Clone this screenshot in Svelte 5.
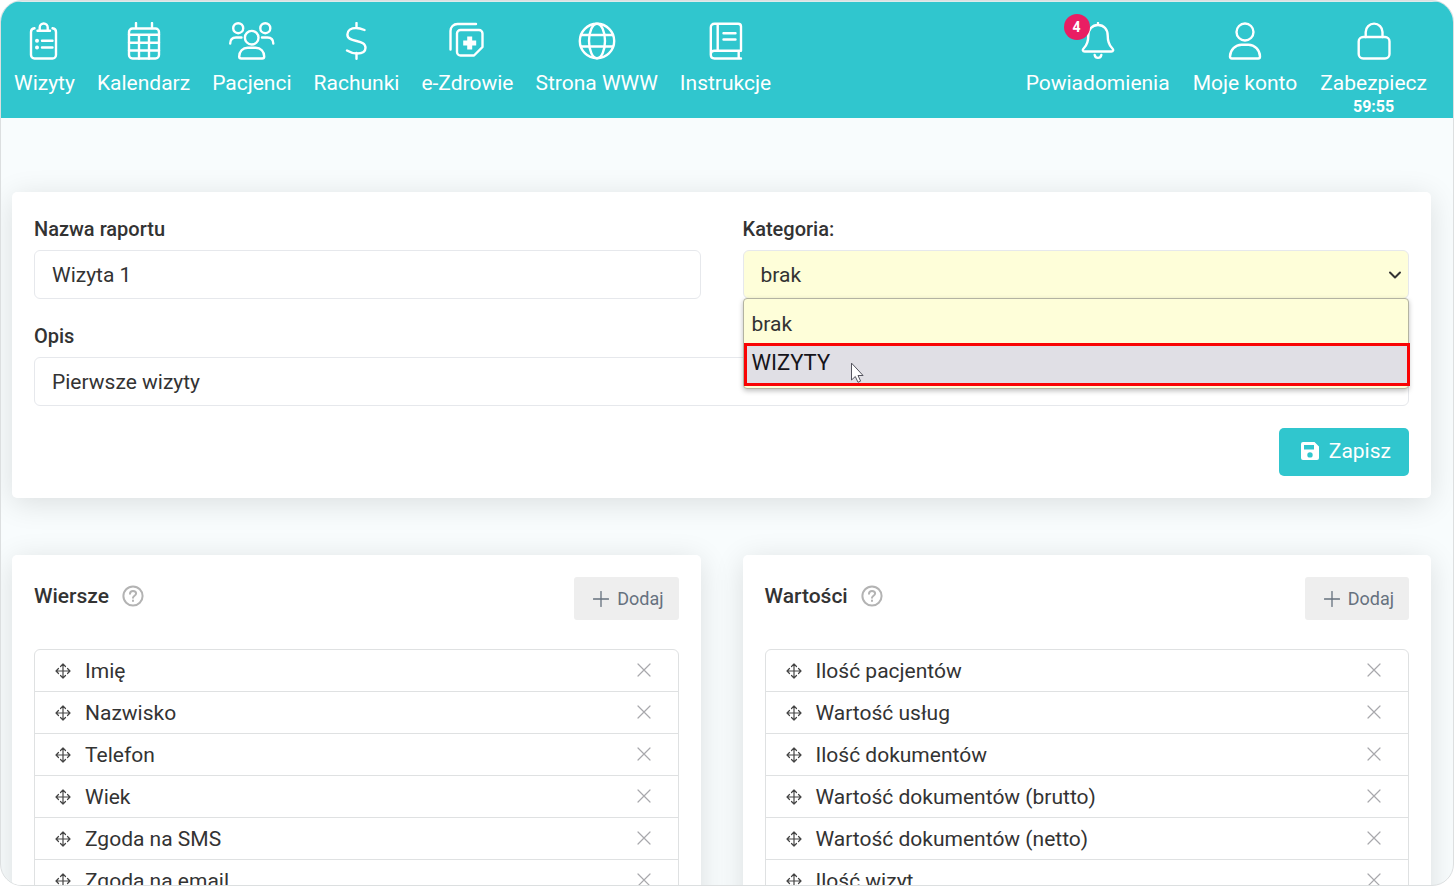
<script lang="ts">
  type Column = { title: string; items: string[] };

  const mainNav = [
    { icon: 'visits', label: 'Wizyty' },
    { icon: 'calendar', label: 'Kalendarz' },
    { icon: 'patients', label: 'Pacjenci' },
    { icon: 'bills', label: 'Rachunki' },
    { icon: 'ehealth', label: 'e-Zdrowie' },
    { icon: 'globe', label: 'Strona WWW' },
    { icon: 'book', label: 'Instrukcje' }
  ];

  const userNav = [
    { icon: 'bell', label: 'Powiadomienia', badge: 4 },
    { icon: 'user', label: 'Moje konto' },
    { icon: 'lock', label: 'Zabezpiecz', timer: '59:55' }
  ];

  const categories = ['brak', 'WIZYTY'];

  let name = $state('Wizyta 1');
  let description = $state('Pierwsze wizyty');
  let category = $state('brak');
  let menuOpen = $state(true);

  let columns: Column[] = $state([
    {
      title: 'Wiersze',
      items: ['Imię', 'Nazwisko', 'Telefon', 'Wiek', 'Zgoda na SMS', 'Zgoda na email']
    },
    {
      title: 'Wartości',
      items: [
        'Ilość pacjentów',
        'Wartość usług',
        'Ilość dokumentów',
        'Wartość dokumentów (brutto)',
        'Wartość dokumentów (netto)',
        'Ilość wizyt'
      ]
    }
  ]);

  function pick(value: string) {
    category = value;
    menuOpen = false;
  }

  function toggleMenu(e: MouseEvent) {
    e.preventDefault();
    menuOpen = !menuOpen;
  }

  function removeItem(column: Column, index: number) {
    column.items.splice(index, 1);
  }
</script>

{#snippet navIcon(icon: string)}
  <svg class="nav-icon" viewBox={icon === 'patients' ? '0 0 46 38' : '0 0 38 38'} class:wide={icon === 'patients'} aria-hidden="true">
    {#if icon === 'visits'}
      <path d="M9.500 6.300C7.300 6.600 6 8 6 10v23a3.500 3.500 0 0 0 3.500 3.500h18A3.500 3.500 0 0 0 31 33V10c0-2-1.300-3.400-3.500-3.700" />
      <path d="M12.500 8.700h12.500M14.700 8.700V5.500a4 4 0 0 1 8 0v3.200M17 18.700h10.500M17 25.500h10.500" />
      <path class="dots" d="M12 18.700h.01M12 25.500h.01" />
    {:else if icon === 'calendar'}
      <rect x="4" y="6.500" width="30" height="30" rx="3.500" />
      <path d="M11 1v5M27 1v5M4 12.700h30M4 20.800h30M4 28.500h30M14 12.700v23.800M24 12.700v23.800" />
    {:else if icon === 'patients'}
      <circle cx="9.200" cy="6.200" r="5" />
      <circle cx="36.300" cy="6.200" r="5" />
      <circle cx="22.700" cy="15.700" r="6.800" />
      <path d="M1.200 21.500C1.200 17.500 3 15.500 7 15.500h5.500M44.300 21.500c0-4-1.800-6-5.800-6H33" />
      <path d="M10.200 34.500c0-5 3.500-8.700 8.500-8.700h8c5 0 8.500 3.700 8.500 8.700 0 1.400-.6 2-2 2h-21c-1.400 0-2-.6-2-2z" />
    {:else if icon === 'bills'}
      <path d="M19.500 1v5M19.500 31v5.800M27.500 8C24 6.600 21.500 6 19 6c-5 0-8.600 2.500-8.600 6.500 0 4.300 4 5.300 9.100 6.500s9 2.300 9 6.800c0 4.200-4 5.700-8.500 5.700-3.500 0-6.700-1-10-3" />
    {:else if icon === 'ehealth'}
      <path d="M2.500 27.500V9c0-4 3-7 7-7h18.500" />
      <path d="M12.500 8h18.500a3.500 3.500 0 0 1 3.500 3.500V25L26 33.500H12.500A3.500 3.500 0 0 1 9 30V11.500A3.500 3.500 0 0 1 12.500 8z" />
      <path class="plus" d="M21.700 14.500v13M15.200 21h13" />
    {:else if icon === 'globe'}
      <circle cx="19" cy="19" r="17.200" />
      <ellipse cx="19" cy="19" rx="8" ry="17.200" />
      <path d="M3 13h32M3 24.500h32" />
    {:else if icon === 'book'}
      <path d="M34 28.500V4.500C34 2.700 33 1.700 31.200 1.700H7.500c-2.300 0-3.700 1.500-3.700 3.800v27.300c0 2.300 1.500 3.700 3.700 3.700H34M34 28.700H7.500c-2.200 0-3.700 1.500-3.700 3.700M10.700 1.700v27M31.700 28.700v7.800M16.500 11.200h12M16.500 17.500h12" />
    {:else if icon === 'bell'}
      <path d="M19 1v2M19 3c-6 0-9.700 4.500-9.700 10.500 0 6-1.300 9.500-4.300 12.500-2 2-1.200 3.500.7 3.500h26.600c1.900 0 2.700-1.500.7-3.500-3-3-4.300-6.500-4.300-12.500C28.700 7.500 25 3 19 3zM15.700 33c.4 1.900 1.600 2.900 3.300 2.900s2.900-1 3.300-2.900" />
    {:else if icon === 'user'}
      <circle cx="19" cy="10" r="8.500" />
      <path d="M4 34.500C4 28 9.500 22.700 15.500 22.700h7C28.500 22.700 34 28 34 34.500c0 1.300-.6 2-1.800 2H5.800c-1.200 0-1.800-.7-1.800-2z" />
    {:else if icon === 'lock'}
      <rect x="3.700" y="15" width="30.800" height="21.500" rx="4.500" />
      <path d="M10.700 15V10a8.400 8.400 0 0 1 16.800 0v5" />
    {/if}
  </svg>
{/snippet}

<div class="frame">
  <header>
    <nav>
      {#each mainNav as item}
        <a href="#{item.icon}" class="nav-item">
          {@render navIcon(item.icon)}
          <span>{item.label}</span>
        </a>
      {/each}
    </nav>
    <nav class="user-nav">
      {#each userNav as item}
        <a href="#{item.icon}" class="nav-item">
          {@render navIcon(item.icon)}
          <span>{item.label}</span>
          {#if item.badge}
            <span class="badge">{item.badge}</span>
          {/if}
          {#if item.timer}
            <span class="timer">{item.timer}</span>
          {/if}
        </a>
      {/each}
    </nav>
  </header>

  <main>
    <!-- Report form -->
    <form class="card report-form" onsubmit={(e) => e.preventDefault()}>
      <div class="field">
        <label for="name">Nazwa raportu</label>
        <input id="name" type="text" bind:value={name} />
      </div>
      <div class="field">
        <label for="category">Kategoria:</label>
        <div class="select-wrap">
          <select id="category" bind:value={category} onmousedown={toggleMenu}>
            {#each categories as c}
              <option value={c}>{c}</option>
            {/each}
          </select>
          <svg class="chevron" viewBox="0 0 14 14" aria-hidden="true"><path d="M2 4.500l5 5 5-5" /></svg>
          {#if menuOpen}
            <div class="menu">
              {#each categories as c}
                <button type="button" class="menu-item" class:marked={c === 'WIZYTY'} onclick={() => pick(c)}>
                  {c}
                  {#if c === 'WIZYTY'}
                    <svg class="cursor" viewBox="0 0 14 22" aria-hidden="true">
                      <path d="M1.500 1.500v16.500l3.800-3.500 2.700 5.800 2.600-1.200-2.600-5.600h4.700z" />
                    </svg>
                  {/if}
                </button>
              {/each}
            </div>
          {/if}
        </div>
      </div>
      <div class="field full">
        <label for="description">Opis</label>
        <input id="description" type="text" bind:value={description} />
      </div>
      <div class="actions full">
        <button type="submit" class="save-btn">
          <svg viewBox="0 0 20 20" aria-hidden="true">
            <path fill-rule="evenodd" d="M3 1h11.500L19 5.500V17a2 2 0 0 1-2 2H3a2 2 0 0 1-2-2V3a2 2 0 0 1 2-2zm1 3v4.500h10V4zm6 7.200a2.700 2.700 0 1 0 0 5.400 2.700 2.700 0 0 0 0-5.400z" />
          </svg>
          Zapisz
        </button>
      </div>
    </form>

    <!-- Rows and values -->
    <div class="columns">
      {#each columns as column}
        <section class="card">
          <div class="card-head">
            <h2>
              {column.title}
              <svg class="help" viewBox="0 0 22 22" aria-hidden="true">
                <circle cx="11" cy="11" r="9.600" />
                <path d="M8 8.700c.1-1.700 1.300-2.700 3-2.700s3.100 1 3.100 2.500c0 2.200-3.100 2.200-3.100 4.300M11 15.500v.5" />
              </svg>
            </h2>
            <button type="button" class="add-btn">
              <svg viewBox="0 0 16 16" aria-hidden="true"><path d="M8 0.500v15M0.500 8h15" /></svg>
              Dodaj
            </button>
          </div>
          <ul>
            {#each column.items as item, i}
              <li>
                <svg class="move" viewBox="0 0 16 16" aria-hidden="true">
                  <path d="M8 1.500v13M1.500 8h13M5.500 3.500L8 1l2.500 2.500M5.500 12.500L8 15l2.500-2.500M3.500 5.500L1 8l2.500 2.500M12.500 5.500L15 8l-2.500 2.500" />
                </svg>
                <span>{item}</span>
                <button type="button" class="remove-btn" aria-label="Usuń" onclick={() => removeItem(column, i)}>
                  <svg viewBox="0 0 14 14" aria-hidden="true"><path d="M1 1l12 12M13 1L1 13" /></svg>
                </button>
              </li>
            {/each}
          </ul>
        </section>
      {/each}
    </div>
  </main>
</div>

<style>
  :global(body) {
    background: #fff;
  }

  .frame {
    box-sizing: border-box;
    height: 100vh;
    overflow: hidden;
    border: 1px solid #dcdfe0;
    border-radius: 22px;
    background: #f8fcfd;
    font-family: Roboto, sans-serif;
    font-size: 21px;
    color: #333;
  }

  button,
  input,
  select {
    box-sizing: border-box;
    font: inherit;
    color: inherit;
  }

  button {
    cursor: pointer;
  }

  svg {
    flex-shrink: 0;
    fill: none;
    stroke: currentColor;
    stroke-linecap: round;
    stroke-linejoin: round;
  }

  /* Top bar */
  header {
    display: flex;
    justify-content: space-between;
    height: 117px;
    padding: 0 26px 0 13px;
    box-sizing: border-box;
    border-top: 1px solid #dcebec;
    background: #30c6ce;
  }

  nav {
    display: flex;
    gap: 22px;
  }

  .user-nav {
    gap: 23px;
  }

  .nav-item {
    position: relative;
    display: flex;
    flex-direction: column;
    align-items: center;
    padding-top: 20px;
    color: #fff;
    line-height: 24px;
    text-decoration: none;
    white-space: nowrap;
  }

  .nav-icon {
    width: 38px;
    height: 38px;
    margin-bottom: 11px;
    stroke-width: 2.4;
  }

  .nav-icon.wide {
    width: 46px;
  }

  .dots {
    stroke-width: 4;
  }

  .plus {
    stroke-width: 5;
    stroke-linecap: butt;
  }

  .badge {
    position: absolute;
    top: 12px;
    left: 50%;
    width: 26px;
    margin-left: -34px;
    border-radius: 50%;
    background: #e91e63;
    font-size: 14px;
    font-weight: 700;
    line-height: 26px;
    text-align: center;
  }

  .timer {
    font-size: 16px;
    font-weight: 700;
  }

  /* Cards */
  main {
    padding: 74px 22px 22px 11px;
  }

  .card {
    padding: 22px;
    border-radius: 5px;
    background: #fff;
    box-shadow: 0 5px 30px rgba(0, 0, 0, 0.12);
  }

  .report-form {
    display: grid;
    grid-template-columns: 1fr 1fr;
    gap: 22px 42px;
  }

  .full {
    grid-column: 1 / -1;
  }

  label {
    display: block;
    margin-bottom: 6px;
    font-size: 20px;
    font-weight: 500;
    line-height: 30px;
  }

  input,
  select {
    display: block;
    width: 100%;
    height: 49px;
    padding: 0 17px;
    border: 1px solid #e6e8ec;
    border-radius: 6px;
    background: #fff;
    outline: none;
  }

  select {
    appearance: none;
    background: #fefed9;
  }

  .select-wrap {
    position: relative;
  }

  .chevron {
    position: absolute;
    top: 18px;
    right: 7px;
    width: 14px;
    height: 14px;
    stroke-width: 2;
    pointer-events: none;
  }

  .menu {
    position: absolute;
    z-index: 1;
    top: 48px;
    left: 0;
    right: 0;
    box-sizing: border-box;
    padding-bottom: 2px;
    border: 1px solid #b3b3a2;
    border-radius: 4px;
    background: #fefed9;
    box-shadow: 0 2px 5px rgba(0, 0, 0, 0.25);
  }

  .menu-item {
    display: flex;
    align-items: center;
    gap: 20px;
    width: 100%;
    height: 44px;
    padding: 6px 8px 0;
    border: none;
    background: none;
  }

  .marked {
    width: calc(100% + 2px);
    height: 43px;
    padding: 0 5px 4px;
    border: 3px solid #f90404;
    background: #e0dfe5;
    color: #15141a;
    font-size: 22px;
  }

  .cursor {
    width: 14px;
    height: 22px;
    margin-top: 20px;
    fill: #fff;
    stroke: #55555f;
  }

  .actions {
    display: flex;
    justify-content: flex-end;
  }

  .save-btn {
    display: flex;
    align-items: center;
    gap: 9px;
    height: 48px;
    padding: 0 18px 2px 21px;
    border: none;
    border-radius: 5px;
    background: #30c6ce;
    color: #fff;
  }

  .save-btn svg {
    width: 20px;
    height: 20px;
    fill: currentColor;
    stroke: none;
  }

  /* Column lists */
  .columns {
    display: grid;
    grid-template-columns: 1fr 1fr;
    gap: 42px;
    margin-top: 57px;
  }

  .card-head {
    display: flex;
    justify-content: space-between;
    align-items: flex-start;
    margin-bottom: 29px;
  }

  h2 {
    display: flex;
    align-items: center;
    gap: 13px;
    margin: 0;
    font-size: 21px;
    font-weight: 500;
    line-height: 38px;
  }

  .help {
    width: 22px;
    height: 22px;
    color: #b3b3b3;
    stroke-width: 2;
  }

  .add-btn {
    display: flex;
    align-items: center;
    gap: 8px;
    height: 43px;
    padding: 0 15px 0 19px;
    border: none;
    border-radius: 3px;
    background: #eee;
    color: #66717e;
    font-size: 18px;
  }

  .add-btn svg {
    width: 16px;
    height: 16px;
    stroke-width: 1.3;
  }

  ul {
    margin: 0;
    padding: 0;
    border: 1px solid #dfe1e2;
    border-radius: 6px;
    list-style: none;
  }

  li {
    display: flex;
    align-items: center;
    gap: 14px;
    height: 41px;
    padding: 0 27px 0 20px;
  }

  li + li {
    border-top: 1px solid #dfe1e2;
  }

  li span {
    flex: 1;
  }

  .move {
    width: 16px;
    height: 16px;
    color: #444;
    stroke-width: 1.2;
  }

  .remove-btn {
    display: flex;
    padding: 0 0 2px;
    border: none;
    background: none;
    color: #a8a8ac;
  }

  .remove-btn svg {
    width: 14px;
    height: 14px;
    stroke-width: 1.2;
  }
</style>
